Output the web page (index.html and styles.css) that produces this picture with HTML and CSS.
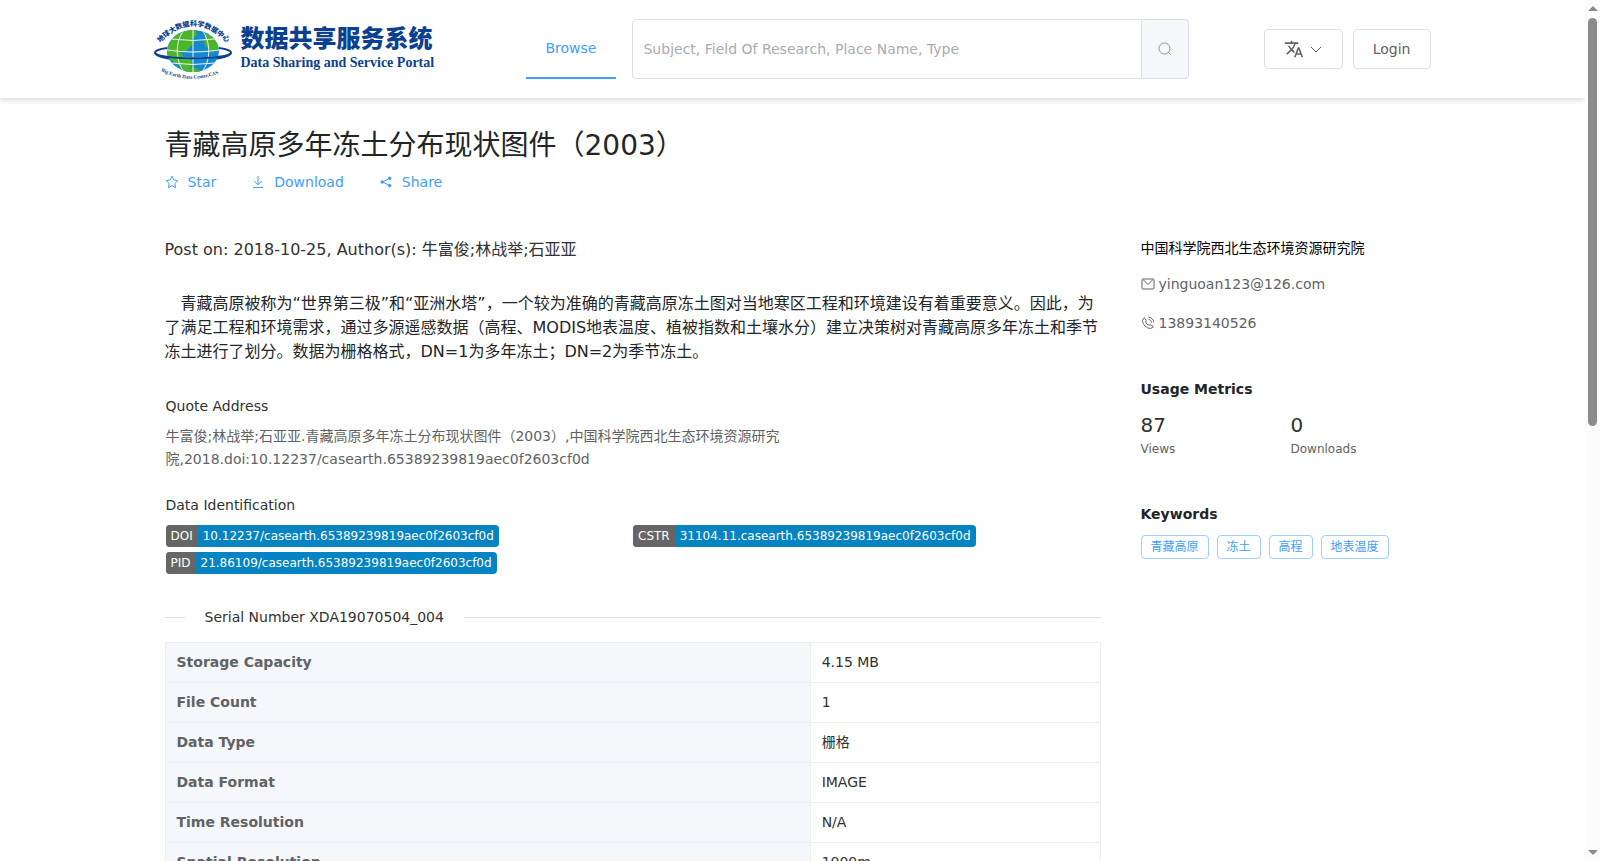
FILE: index.html
```html
<!DOCTYPE html>
<html lang="zh-CN">
<head>
    <meta charset="UTF-8">
    <meta name="viewport" content="width=device-width, initial-scale=1.0">
    <title>Data Sharing and Service Portal</title>
    <link rel="stylesheet" href="styles.css">
</head>
<body>
    <div class="page">
        <header class="header">
            <div class="container header-inner">
                <a class="logo" href="#">
                    <svg class="logo-globe" viewBox="0 0 80 64" aria-hidden="true">
                        <defs>
                            <clipPath id="globe-clip"><ellipse cx="40" cy="34" rx="26" ry="21"/></clipPath>
                            <path id="arc-top" d="M7 26Q40 -8 74 26"/>
                            <path id="arc-bottom" d="M8 54Q40 70 73 53"/>
                        </defs>
                        <text class="arc-cn"><textPath href="#arc-top">地球大数据科学数据中心</textPath></text>
                        <path d="M14 31C6 32 2 34 2 35.500C2 40 19 43 40 43S78 40 78 35.500C78 34 74 32 66 31" fill="none" stroke="#0b3f8f" stroke-width="2"/>
                        <g clip-path="url(#globe-clip)">
                            <rect x="14" y="13" width="52" height="42" fill="#1588d2"/>
                            <path d="M14 30L22 18L34 13H43L44 18L38 22L42 25L36 31L32 35L26 34L31 40L39 43L38 50L34 56L25 48L14 40Z" fill="#4cb52c"/>
                            <path d="M54 15L62 20L66 30L60 36L56 32L52 29L51 23Z" fill="#4cb52c"/>
                            <path d="M30 55L40 50L50 55Z" fill="#4cb52c"/>
                            <g fill="none" stroke="#e9f6ee">
                                <path d="M40 13V55M31 13C22 25 22 43 31 55M49 13C58 25 58 43 49 55M18 22Q40 25 62 22M14 33Q40 37 66 33M18 46Q40 49 62 46"/>
                            </g>
                        </g>
                        <path d="M3 37C12 42 68 42 77 37" fill="none" stroke="#fff"/>
                        <path d="M2 36C7 43 73 43 78 36" fill="none" stroke="#0b3f8f" stroke-width="2"/>
                        <text class="arc-en"><textPath href="#arc-bottom">Big Earth Data Center,CAS</textPath></text>
                    </svg>
                    <span class="logo-text">
                        <span class="logo-cn">数据共享服务系统</span>
                        <span class="logo-en">Data Sharing and Service Portal</span>
                    </span>
                </a>

                <nav class="menu">
                    <a class="menu-item active" href="#">Browse</a>
                </nav>

                <form class="search">
                    <input type="text" name="keyword" aria-label="Search" placeholder="Subject, Field Of Research, Place Name, Type">
                    <button type="button" aria-label="Search">
                        <svg class="icon" viewBox="0 0 14 14"><circle cx="6.500" cy="6.500" r="5.500"/><path d="M10.500 10.500L12.800 12.800"/></svg>
                    </button>
                </form>

                <div class="actions">
                    <button class="btn btn-lang" type="button" aria-label="Language">
                        <svg class="icon-lang" viewBox="0 0 24 24"><path d="M12.870 15.070l-2.540-2.510.03-.03A17.520 17.520 0 0 0 14.070 6H17V4h-7V2H8v2H1v2h11.170C11.500 7.920 10.440 9.750 9 11.350 8.070 10.320 7.300 9.190 6.690 8h-2c.73 1.630 1.730 3.170 2.980 4.560l-5.090 5.020L4 19l5-5 3.110 3.110.76-2.040zM18.500 10h-2L12 22h2l1.120-3h4.750L21 22h2l-4.500-12zm-2.620 7l1.620-4.330L19.120 17h-3.240z"/></svg>
                        <svg class="icon" viewBox="0 0 14 14"><path d="M2 5L7 10L12 5"/></svg>
                    </button>
                    <button class="btn" type="button">Login</button>
                </div>
            </div>
        </header>

        <div class="container content">
            <h1>青藏高原多年冻土分布现状图件（2003）</h1>
            <div class="links">
                <a href="#">
                    <svg class="icon" viewBox="0 0 14 14"><path d="M7 1.200L8.800 5L12.900 5.600L9.900 8.500L10.600 12.700L7 10.700L3.400 12.700L4.100 8.500L1.100 5.600L5.200 5Z"/></svg>
                    Star
                </a>
                <a href="#">
                    <svg class="icon" viewBox="0 0 14 14"><path d="M7 1V9.500M3.200 6L7 9.800L10.800 6M2 12.500H12"/></svg>
                    Download
                </a>
                <a href="#">
                    <svg class="icon" viewBox="0 0 14 14"><path d="M10.500 3.500L3.500 7L10.500 10.500"/><g fill="currentColor"><circle cx="10.700" cy="3.300" r="1.300"/><circle cx="3.200" cy="7" r="1.300"/><circle cx="10.700" cy="10.700" r="1.300"/></g></svg>
                    Share
                </a>
            </div>

            <div class="columns">
                <main>
                    <p class="post">Post on: 2018-10-25, Author(s): 牛富俊;林战举;石亚亚</p>
                    <p class="description">青藏高原被称为“世界第三极”和“亚洲水塔”，一个较为准确的青藏高原冻土图对当地寒区工程和环境建设有着重要意义。因此，为了满足工程和环境需求，通过多源遥感数据（高程、MODIS地表温度、植被指数和土壤水分）建立决策树对青藏高原多年冻土和季节冻土进行了划分。数据为栅格格式，DN=1为多年冻土；DN=2为季节冻土。</p>

                    <section class="block">
                        <h2>Quote Address</h2>
                        <p class="quote">牛富俊;林战举;石亚亚.青藏高原多年冻土分布现状图件（2003）,中国科学院西北生态环境资源研究院,2018.doi:10.12237/casearth.65389239819aec0f2603cf0d</p>
                    </section>

                    <section class="block">
                        <h2>Data Identification</h2>
                        <div class="badges">
                            <a class="badge" href="#"><span>DOI</span><span>10.12237/casearth.65389239819aec0f2603cf0d</span></a>
                            <a class="badge" href="#"><span>CSTR</span><span>31104.11.casearth.65389239819aec0f2603cf0d</span></a>
                            <a class="badge" href="#"><span>PID</span><span>21.86109/casearth.65389239819aec0f2603cf0d</span></a>
                        </div>
                    </section>

                    <div class="divider">Serial Number XDA19070504_004</div>

                    <table>
                        <tr><th scope="row">Storage Capacity</th><td>4.15 MB</td></tr>
                        <tr><th scope="row">File Count</th><td>1</td></tr>
                        <tr><th scope="row">Data Type</th><td>栅格</td></tr>
                        <tr><th scope="row">Data Format</th><td>IMAGE</td></tr>
                        <tr><th scope="row">Time Resolution</th><td>N/A</td></tr>
                        <tr><th scope="row">Spatial Resolution</th><td>1000m</td></tr>
                    </table>
                </main>

                <aside>
                    <div class="org">中国科学院西北生态环境资源研究院</div>
                    <div class="contact">
                        <svg class="icon" viewBox="0 0 14 14"><rect x="1" y="2" width="12" height="10" rx="1"/><path d="M2 2.500L7 7.500L12 2.500"/></svg>
                        yinguoan123@126.com
                    </div>
                    <div class="contact">
                        <svg class="icon" viewBox="0 0 14 14"><path d="M1.500 4.300L3.300 1.600L5.300 4.500L4.600 6C5.300 7.600 6.400 8.700 8 9.400L9.500 8.700L12.400 10.700L9.700 12.500C5.500 12.500 1.500 8.500 1.500 4.300ZM7.500 1.200C10.300 1.200 12.800 3.700 12.800 6.500M7.500 3.500C9.100 3.500 10.500 4.900 10.500 6.500"/></svg>
                        13893140526
                    </div>

                    <h3>Usage Metrics</h3>
                    <div class="metrics">
                        <div><strong>87</strong><span>Views</span></div>
                        <div><strong>0</strong><span>Downloads</span></div>
                    </div>

                    <h3>Keywords</h3>
                    <div class="tags">
                        <span class="tag">青藏高原</span>
                        <span class="tag">冻土</span>
                        <span class="tag">高程</span>
                        <span class="tag">地表温度</span>
                    </div>
                </aside>
            </div>
        </div>
    </div>

    <div class="scrollbar" aria-hidden="true">
        <span class="arrow-up"></span>
        <div class="track"><div class="thumb"></div></div>
        <span class="arrow-down"></span>
    </div>
</body>
</html>
```
FILE: styles.css
```css
* {
    margin: 0;
    padding: 0;
    box-sizing: border-box;
}

body {
    display: flex;
    height: 100vh;
    overflow: hidden;
    font-family: "DejaVu Sans", "Noto Sans CJK SC", sans-serif;
    font-size: 14px;
    line-height: 20px;
    color: #303133;
    background: #fff;
}

a {
    color: inherit;
    text-decoration: none;
}

button, input {
    font: inherit;
}

.page {
    flex: 1;
    min-width: 0;
    overflow: hidden;
}

.container {
    max-width: 1280px;
    margin: 0 auto;
}

.icon {
    width: 14px;
    height: 14px;
    flex: none;
    fill: none;
    stroke: currentColor;
}

/* Header */
.header {
    box-shadow: 0 2px 6px rgba(0, 0, 0, 0.15);
}

.header-inner {
    display: flex;
    align-items: center;
    padding: 19px 2px 19px 0;
}

.logo {
    display: flex;
    align-items: center;
    gap: 8px;
    flex: 0 0 373px;
    color: #0b3f8f;
}

.logo-globe {
    width: 80px;
    height: 64px;
    margin: -2px 0;
}

.arc-cn {
    font: 900 7px "Noto Sans CJK SC", sans-serif;
    fill: #0b3f8f;
}

.arc-en {
    font: bold 5px "Liberation Serif", serif;
    fill: #0b3f8f;
}

.logo-text {
    display: flex;
    flex-direction: column;
}

.logo-cn {
    font: 900 24px/28px "Noto Sans CJK SC", sans-serif;
}

.logo-en {
    font: bold 14px/24px "Liberation Serif", serif;
    white-space: nowrap;
}

.menu-item {
    display: block;
    height: 60px;
    padding: 0 20px;
    line-height: 58px;
}

.menu-item.active {
    color: #409eff;
    border-bottom: 2px solid #409eff;
}

.search {
    display: flex;
    flex: 1;
    height: 60px;
    margin: 0 75px 0 16px;
}

.search input {
    flex: 1;
    min-width: 0;
    padding: 0 10px;
    border: 1px solid #dcdfe6;
    border-radius: 4px 0 0 4px;
    outline: none;
}

.search input::placeholder {
    color: #a8abb2;
    opacity: 1;
}

.search button {
    display: flex;
    align-items: center;
    justify-content: center;
    width: 47px;
    color: #909399;
    background: #f5f7fa;
    border: 1px solid #dcdfe6;
    border-left: none;
    border-radius: 0 4px 4px 0;
}

.actions {
    display: flex;
    gap: 10px;
}

.btn {
    display: flex;
    align-items: center;
    gap: 5px;
    height: 40px;
    padding: 0 19px;
    color: #606266;
    background: #fff;
    border: 1px solid #dcdfe6;
    border-radius: 4px;
}

.icon-lang {
    width: 20px;
    height: 20px;
    fill: #606266;
}

/* Content */
.content {
    padding: 29px 12px 0;
}

h1 {
    font-size: 28px;
    font-weight: 400;
    line-height: 38px;
    color: #212529;
}

.links {
    display: flex;
    gap: 35px;
    margin-top: 7px;
    color: #409eff;
}

.links a {
    display: flex;
    align-items: center;
    gap: 9px;
}

.columns {
    display: grid;
    grid-template-columns: minmax(0, 936fr) minmax(0, 280fr);
    gap: 40px;
    margin-top: 46px;
}

.post {
    font-size: 16px;
    line-height: 24px;
}

.description {
    margin-top: 30px;
    font-size: 16px;
    line-height: 24px;
    text-indent: 16px;
    color: #212529;
}

.block {
    padding-left: 1px;
}

h2 {
    font-size: 14px;
    font-weight: 400;
    line-height: 20px;
}

.description + .block {
    margin-top: 32px;
}

.quote {
    max-width: 620px;
    margin: 9px 0 24px;
    line-height: 23px;
    color: #606266;
}

.badges {
    display: grid;
    grid-template-columns: 1fr 1fr;
    gap: 5px 0;
    margin-top: 10px;
}

.badge {
    display: flex;
    justify-self: start;
    font-size: 12px;
    line-height: 22px;
    color: #fff;
    background: #0583c2;
    border-radius: 4px;
    overflow: hidden;
}

.badge span {
    padding: 0 5px;
}

.badge span:first-child {
    background: #666;
}

.divider {
    display: flex;
    align-items: center;
    gap: 20px;
    margin: 33px 0 15px;
}

.divider::before,
.divider::after {
    content: "";
    flex: 1;
    height: 1px;
    background: #dcdfe6;
}

.divider::before {
    flex: 0 0 20px;
}

table {
    width: 100%;
    border-collapse: collapse;
}

th, td {
    height: 40px;
    padding: 0 11px 2px;
    text-align: left;
    border: 1px solid #ebeef5;
}

th {
    width: 69%;
    color: #606266;
    background: #f5f7fa;
}

/* Sidebar */
.org {
    line-height: 20px;
    color: #000;
}

.contact {
    display: flex;
    align-items: center;
    gap: 4px;
    margin-top: 15px;
    line-height: 22px;
    color: #606266;
}

.contact + .contact {
    margin-top: 17px;
}

h3 {
    margin-top: 45px;
    font-size: 14px;
    line-height: 20px;
    color: #212529;
}

.metrics {
    display: grid;
    grid-template-columns: 150px 1fr;
    margin-top: 12px;
}

.metrics strong,
.metrics span {
    display: block;
}

.metrics strong {
    font-size: 20px;
    font-weight: 400;
    line-height: 28px;
}

.metrics span {
    font-size: 12px;
    color: #606266;
}

.tags {
    display: flex;
    flex-wrap: wrap;
    gap: 8px;
    margin-top: 11px;
}

.tag {
    padding: 0 9px;
    font-size: 12px;
    line-height: 22px;
    color: #409eff;
    border: 1px solid #9fceff;
    border-radius: 4px;
}

/* Scrollbar */
.scrollbar {
    display: flex;
    flex-direction: column;
    align-items: center;
    width: 15px;
    padding: 6px 0;
    background: #fcfcfc;
}

.track {
    flex: 1;
    width: 9px;
    margin: 7px 0;
}

.thumb {
    height: 408px;
    background: #8b8b8b;
    border-radius: 5px;
}

.arrow-up,
.arrow-down {
    border: 5px solid transparent;
}

.arrow-up {
    border-top: none;
    border-bottom-color: #8b8b8b;
}

.arrow-down {
    border-bottom: none;
    border-top-color: #8b8b8b;
}
```
